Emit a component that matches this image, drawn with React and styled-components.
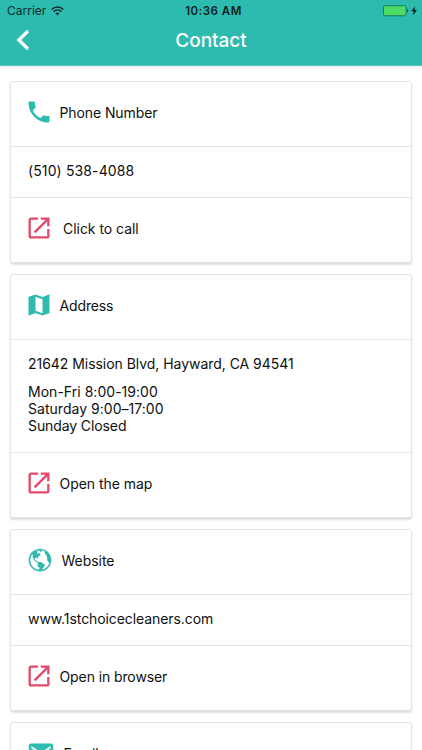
import React from "react";
import styled, { createGlobalStyle, css } from "styled-components";
import { IoMdCall, IoMdOpen, IoMdMap, IoMdGlobe, IoMdMail } from "react-icons/io";

const teal = "#2cbbae";
const pink = "#e4496b";
const divider = "#e4e4e4";

const GlobalStyle = createGlobalStyle`
  * { box-sizing: border-box; }
  body { margin: 0; background: #fff; overflow: hidden; }
`;

const Screen = styled.div`
  height: 750px;
  overflow: hidden;
  background: #fff;
  color: #101010;
  font-family: Inter, "Liberation Sans", sans-serif;
`;

const Header = styled.header`
  height: 66px;
  background: ${teal};
  border-bottom: 1px solid #62c7bd;
  box-shadow: 0 1px 3px rgba(0, 0, 0, 0.12);
`;

const StatusBar = styled.div`
  display: grid;
  grid-template-columns: 1fr auto 1fr;
  align-items: center;
  height: 22px;
  padding: 0 4px 0 7px;
  color: #0b2b29;
  font-size: 12px;
  line-height: 22px;
`;

const Carrier = styled.div`
  display: flex;
  align-items: center;
  gap: 5px;

  svg {
    margin-top: -1px;
  }
`;

const Clock = styled.div`
  padding-left: 2px;
  font-size: 11.5px;
  font-weight: 600;
  letter-spacing: 0.5px;
  color: #08201e;
`;

const Battery = styled.div`
  display: flex;
  justify-content: flex-end;
`;

const NavBar = styled.div`
  display: grid;
  grid-template-columns: 60px 1fr 60px;
  align-items: center;
  height: 36px;
`;

const BackButton = styled.button`
  display: flex;
  margin-top: -2px;
  padding: 0 0 0 16px;
  border: 0;
  background: none;
`;

const Title = styled.h1`
  margin: 0;
  padding-top: 1px;
  color: #fff;
  text-align: center;
  font-size: 19px;
  font-weight: 500;
  line-height: 36px;
  letter-spacing: -0.05px;
`;

const CardList = styled.main`
  display: flex;
  flex-direction: column;
  gap: 11px;
  padding: 15px 10px 0;
`;

const Card = styled.section`
  flex: none;
  border: 1px solid ${divider};
  border-radius: 3px;
  background: #fff;
  box-shadow: 0 2px 2px rgba(0, 0, 0, 0.13);
`;

const rowText = css`
  font-size: 14px;
  line-height: 17.3px;
`;

const IconRow = styled.div`
  ${rowText}
  display: flex;
  align-items: center;
  gap: ${(p) => p.$gap ?? 10.5}px;
  height: ${(p) => (p.$last ? 64 : 65)}px;
  padding: 0 17px 2px;
  border-bottom: ${(p) => (p.$last ? "0" : `1px solid ${divider}`)};
`;

const Glyph = styled.span`
  display: flex;
  justify-content: center;
  flex: none;
  width: ${(p) => p.$width ?? 21}px;
  color: ${(p) => p.$color};

  svg {
    flex: none;
    width: 28px;
    height: 28px;
    margin-top: -2px;
  }
`;

const Body = styled.div`
  ${rowText}
  display: flex;
  flex-direction: column;
  justify-content: center;
  gap: 10px;
  height: ${(p) => p.$height ?? 51}px;
  padding: 0 17px 2px;
  border-bottom: 1px solid ${divider};
`;

const Line = styled.div`
  letter-spacing: ${(p) => p.$spacing ?? -0.04}px;
`;

function WifiIcon() {
  return (
    <svg width="13" height="10" viewBox="0 0 13 10" fill="none" stroke="#0b2b29" strokeWidth="1.5">
      <path d="M.7 3.5C4 .3 9 .3 12.3 3.5M2.7 5.6c2.2-2.1 5.4-2.1 7.6 0" />
      <path d="M4.5 7.3c1.2-1 2.8-1 4 0l-2 2.1z" fill="#0b2b29" stroke="none" />
    </svg>
  );
}

function BatteryIcon() {
  return (
    <svg width="35" height="12" viewBox="0 0 35 12">
      <rect x=".5" y=".7" width="22.6" height="10.1" rx="1.4" fill="#4cd964" stroke="#1c7b60" />
      <path d="M24 4c1.7.5 1.7 3 0 3.5z" fill="#12443f" />
      <path d="M32 1.2 28.3 6.3h2.4l-.6 4 3.8-5.3h-2.4z" fill="#071d1b" />
    </svg>
  );
}

function ChevronIcon() {
  return (
    <svg width="14" height="22" viewBox="0 0 14 22" fill="none" stroke="#fff" strokeWidth="3.2">
      <path d="M12 2 2.8 11 12 20" />
    </svg>
  );
}

export default function App() {
  return (
    <Screen>
      <GlobalStyle />
      <Header>
        <StatusBar>
          <Carrier>
            Carrier
            <WifiIcon />
          </Carrier>
          <Clock>10:36 AM</Clock>
          <Battery>
            <BatteryIcon />
          </Battery>
        </StatusBar>
        <NavBar>
          <BackButton aria-label="Back">
            <ChevronIcon />
          </BackButton>
          <Title>Contact</Title>
        </NavBar>
      </Header>
      <CardList>
        <Card>
          <IconRow>
            <Glyph $color={teal}><IoMdCall /></Glyph>
            <Line $spacing={-0.1}>Phone Number</Line>
          </IconRow>
          <Body><Line $spacing={0.12}>(510) 538-4088</Line></Body>
          <IconRow $last $gap={14}>
            <Glyph $color={pink}><IoMdOpen /></Glyph>
            <Line>Click to call</Line>
          </IconRow>
        </Card>
        <Card>
          <IconRow>
            <Glyph $color={teal}><IoMdMap /></Glyph>
            <Line $spacing={-0.14}>Address</Line>
          </IconRow>
          <Body $height={113}>
            <Line>21642 Mission Blvd, Hayward, CA 94541</Line>
            <div>
              <Line $spacing={0.03}>Mon-Fri 8:00-19:00</Line>
              <Line $spacing={0.03}>Saturday 9:00–17:00</Line>
              <Line $spacing={-0.1}>Sunday Closed</Line>
            </div>
          </Body>
          <IconRow $last>
            <Glyph $color={pink}><IoMdOpen /></Glyph>
            <Line>Open the map</Line>
          </IconRow>
        </Card>
        <Card>
          <IconRow>
            <Glyph $color={teal} $width={23}><IoMdGlobe /></Glyph>
            <Line>Website</Line>
          </IconRow>
          <Body><Line $spacing={-0.08}>www.1stchoicecleaners.com</Line></Body>
          <IconRow $last>
            <Glyph $color={pink}><IoMdOpen /></Glyph>
            <Line $spacing={-0.1}>Open in browser</Line>
          </IconRow>
        </Card>
        <Card>
          <IconRow>
            <Glyph $color={teal} $width={25}><IoMdMail /></Glyph>
            <Line>Email</Line>
          </IconRow>
        </Card>
      </CardList>
    </Screen>
  );
}
